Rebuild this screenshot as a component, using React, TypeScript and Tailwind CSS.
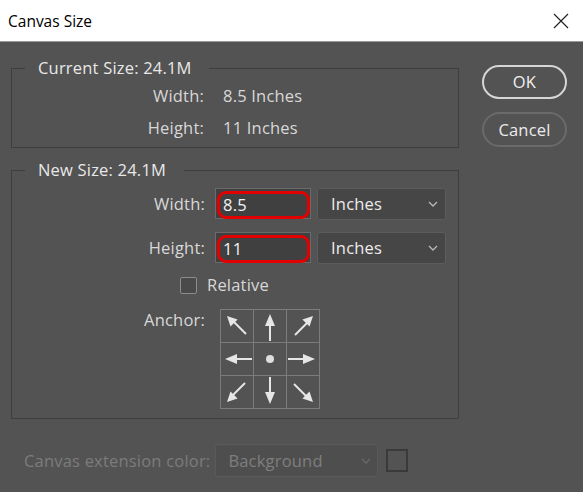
import React from "react";

const font = { fontFamily: '"Open Sans", "Liberation Sans", sans-serif' };

function Chevron({ dim = false }: { dim?: boolean }) {
  return (
    <svg width="10" height="6" viewBox="0 0 10 6" aria-hidden="true">
      <path
        d="M1 1l4 4 4-4"
        fill="none"
        stroke={dim ? "#6a6a6a" : "#b8b8b8"}
        strokeWidth="1.3"
      />
    </svg>
  );
}

// one arrow cell of the anchor grid; 0 = up, straight ones rotate from there
function StraightArrow({ rot }: { rot: number }) {
  return (
    <svg width="32" height="32" viewBox="0 0 32 32" aria-hidden="true">
      <g transform={`rotate(${rot} 16 16)`}>
        <line x1="16" y1="31" x2="16" y2="14" stroke="#e6e6e6" strokeWidth="2" />
        <polygon points="16,4 11,16 21,16" fill="#e6e6e6" />
      </g>
    </svg>
  );
}

function DiagArrow({ rot }: { rot: number }) {
  return (
    <svg width="32" height="32" viewBox="0 0 32 32" aria-hidden="true">
      <g transform={`rotate(${rot} 16 16)`}>
        <line x1="8" y1="25" x2="20" y2="13" stroke="#e6e6e6" strokeWidth="2" />
        <polygon points="26,6 22.5,16.6 15.4,9.5" fill="#e6e6e6" />
      </g>
    </svg>
  );
}

function Dot() {
  return (
    <svg width="32" height="32" viewBox="0 0 32 32" aria-hidden="true">
      <circle cx="16" cy="16" r="4" fill="#dedede" />
    </svg>
  );
}

function AnchorGrid() {
  const cells = [
    <DiagArrow rot={270} />,
    <StraightArrow rot={0} />,
    <DiagArrow rot={0} />,
    <StraightArrow rot={270} />,
    <Dot />,
    <StraightArrow rot={90} />,
    <DiagArrow rot={180} />,
    <StraightArrow rot={180} />,
    <DiagArrow rot={90} />,
  ];
  return (
    <div className="grid grid-cols-[32px_32px_32px] grid-rows-[32px_32px_32px] gap-px bg-[#7c7c7c] p-px w-fit">
      {cells.map((c, i) => (
        <div key={i} className="bg-[#535353] flex items-center justify-center">
          {c}
        </div>
      ))}
    </div>
  );
}

function SizeRow({ label, value }: { label: string; value: string }) {
  return (
    <div className="flex items-center h-[31px]">
      <span className="w-[203px] pr-[10px] text-right text-[#d8d8d8]">{label}</span>
      <div className="w-[96px] h-[31px] border border-[#6a6a6a] bg-[#404040] pt-[2px] pl-px">
        <div className="h-[28px] w-[93px] rounded-[9px] border-[3px] border-[#e30000] flex items-center pl-[3px] text-[#f2f2f2]">
          {value}
        </div>
      </div>
      <div className="ml-[6px] w-[129px] h-[32px] rounded-[3px] border border-[#5c5c5c] bg-[#464646] flex items-center justify-between pl-[13px] pr-[7px] text-[#ececec]">
        <span>Inches</span>
        <Chevron />
      </div>
    </div>
  );
}

export default function App() {
  return (
    <div
      className="w-[583px] h-[492px] overflow-hidden bg-[#535353] text-[16.5px] leading-[22px] tracking-[0.2px]"
      style={font}
    >
      {/* title bar */}
      <div className="h-[42px] bg-white border-b border-[#9a9a9a] flex items-center justify-between pl-[8px] pr-[14px]">
        <span className="text-[15.5px] tracking-normal text-black">Canvas Size</span>
        <svg width="16" height="16" viewBox="0 0 16 16" aria-hidden="true">
          <path d="M1 1l14 14M15 1L1 15" stroke="#222" strokeWidth="1.2" />
        </svg>
      </div>

      <div className="flex gap-[23px] pl-[11px] pt-[15px]">
        <div className="w-[448px] flex flex-col">
          <fieldset className="border border-[#3e3e3e]">
            <legend className="ml-[13px] pl-[13px] pr-[17px] text-[#e8e8e8]">
              Current Size: 24.1M
            </legend>
            <div className="grid grid-cols-[192px_auto] gap-x-[19px] gap-y-[8px] pt-[5px] pb-[7px] text-[#d8d8d8]">
              <span className="text-right leading-[24px]">Width:</span>
              <span className="leading-[24px]">8.5 Inches</span>
              <span className="text-right leading-[24px]">Height:</span>
              <span className="leading-[24px]">11 Inches</span>
            </div>
          </fieldset>

          <fieldset className="mt-[11px] border border-[#3e3e3e]">
            <legend className="ml-[13px] pl-[13px] pr-[18px] text-[#e8e8e8]">
              New Size: 24.1M
            </legend>
            <div className="flex flex-col gap-[13px] pt-[7px] pb-[9px]">
              <SizeRow label="Width:" value="8.5" />
              <SizeRow label="Height:" value="11" />
              <div className="flex items-center h-[18px] pl-[168px] gap-[10px] text-[#d8d8d8]">
                <span className="w-[17px] h-[17px] rounded-[2px] border border-[#8c8c8c] bg-[#4a4a4a]" />
                <span>Relative</span>
              </div>
              <div className="flex mt-[2px]">
                <span className="w-[193px] text-right text-[#d8d8d8]">Anchor:</span>
                <div className="ml-[15px]">
                  <AnchorGrid />
                </div>
              </div>
            </div>
          </fieldset>

          <div className="mt-[25px] flex items-center">
            <span className="ml-[13px] text-[#7c7c7c]">Canvas extension color:</span>
            <div className="ml-[5px] w-[163px] h-[33px] rounded-[3px] border border-[#5a5a5a] bg-[#4e4e4e] flex items-center justify-between pl-[12px] pr-[6px] text-[#7e7e7e]">
              <span>Background</span>
              <Chevron dim />
            </div>
            <span className="ml-[8px] w-[22px] h-[23px] border-2 border-[#3a3a3a] bg-[#535353]" />
          </div>
        </div>

        <div className="flex flex-col gap-[13px] mt-[8px]">
          <button
            type="button"
            className="w-[85px] h-[34px] rounded-full border-2 border-[#d6d6d6] text-[#f0f0f0]"
          >
            OK
          </button>
          <button
            type="button"
            className="w-[85px] h-[35px] rounded-full border-2 border-[#6a6a6a] text-[#ececec]"
          >
            Cancel
          </button>
        </div>
      </div>
    </div>
  );
}
